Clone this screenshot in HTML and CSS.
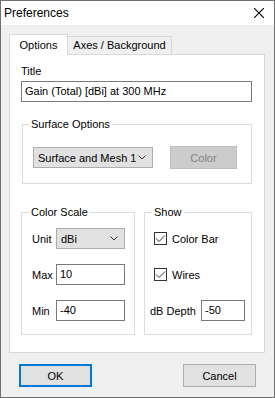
FILE: index.html
```html
<!DOCTYPE html>
<html lang="en">
<head>
    <meta charset="UTF-8">
    <title>Preferences</title>
    <link rel="stylesheet" href="styles.css">
</head>
<body>
    <div class="window">
        <div class="titlebar">
            <span class="caption">Preferences</span>
            <svg class="close" width="10" height="10" viewBox="0 0 10 10">
                <path d="M0 0 L10 10 M10 0 L0 10" stroke="#000" stroke-width="1.1" fill="none"/>
            </svg>
        </div>
        <div class="client">
            <div class="tabs">
                <div class="tab active options">Options</div>
                <div class="tab axes">Axes / Background</div>
            </div>
            <div class="panel">
                <div class="label">Title</div>
                <div class="textbox wide">Gain (Total) [dBi] at 300 MHz</div>

                <fieldset class="group surface">
                    <legend>Surface Options</legend>
                    <div class="group-body">
                        <div class="row">
                            <div class="combo mesh">
                                <span>Surface and Mesh 1</span>
                                <svg class="chev" width="8" height="5" viewBox="0 0 8 5"><path d="M0.5 0.5 L4 4 L7.5 0.5" stroke="#333" fill="none"/></svg>
                            </div>
                            <div class="button disabled color-btn">Color</div>
                        </div>
                    </div>
                </fieldset>

                <div class="groups">
                    <fieldset class="group scale">
                        <legend>Color Scale</legend>
                        <div class="group-body">
                            <div class="row">
                                <span class="row-label">Unit</span>
                                <div class="combo unit">
                                    <span>dBi</span>
                                    <svg class="chev" width="8" height="5" viewBox="0 0 8 5"><path d="M0.5 0.5 L4 4 L7.5 0.5" stroke="#333" fill="none"/></svg>
                                </div>
                            </div>
                            <div class="row">
                                <span class="row-label">Max</span>
                                <div class="textbox small">10</div>
                            </div>
                            <div class="row">
                                <span class="row-label">Min</span>
                                <div class="textbox small">-40</div>
                            </div>
                        </div>
                    </fieldset>

                    <fieldset class="group show">
                        <legend>Show</legend>
                        <div class="group-body">
                            <div class="row check-row">
                                <span class="checkbox"><svg width="11" height="11" viewBox="0 0 11 11"><path d="M1 5.5 L4 8.5 L10 2.5" stroke="#333" fill="none"/></svg></span>
                                <span>Color Bar</span>
                            </div>
                            <div class="row check-row">
                                <span class="checkbox"><svg width="11" height="11" viewBox="0 0 11 11"><path d="M1 5.5 L4 8.5 L10 2.5" stroke="#333" fill="none"/></svg></span>
                                <span>Wires</span>
                            </div>
                            <div class="row">
                                <span class="depth-label">dB Depth</span>
                                <div class="textbox depth">-50</div>
                            </div>
                        </div>
                    </fieldset>
                </div>
            </div>
            <div class="footer">
                <div class="button default">OK</div>
                <div class="button">Cancel</div>
            </div>
        </div>
    </div>
</body>
</html>
```

FILE: styles.css
```css
body {
    margin: 0;
    font-family: "Liberation Sans", Arial, sans-serif;
    font-size: 11px;
    color: #000;
}
.window {
    width: 275px;
    height: 398px;
    box-sizing: border-box;
    border: 1px solid #6f6f6f;
    background-color: #f0f0f0;
}
.titlebar {
    height: 24px;
    background-color: #fff;
    display: flex;
    align-items: center;
    justify-content: space-between;
    padding: 0 10px 0 3px;
}
.caption {
    font-size: 12px;
    line-height: 16px;
}
.client {
    padding: 9px 9px 0 8px;
}
.tabs {
    display: flex;
    align-items: flex-end;
    height: 20px;
}
.tab {
    height: 18px;
    line-height: 17px;
    text-align: center;
    background-color: #f0f0f0;
    border: 1px solid #d9d9d9;
    border-bottom: none;
    box-sizing: border-box;
}
.tab.options {
    width: 59px;
}
.tab.axes {
    width: 104px;
    border-left: none;
}
.tab.active {
    height: 21px;
    line-height: 20px;
    background-color: #fff;
    margin-bottom: -1px;
    position: relative;
    z-index: 1;
}
.panel {
    background-color: #fff;
    border: 1px solid #d9d9d9;
    padding: 8px 12px 17px 11px;
}
.label {
    height: 16px;
    line-height: 16px;
    margin-bottom: 2px;
}
.textbox {
    height: 21px;
    box-sizing: border-box;
    border: 1px solid #7a7a7a;
    background-color: #fff;
    line-height: 19px;
    padding-left: 3px;
    white-space: nowrap;
}
.textbox.wide {
    width: 231px;
}
.textbox.small {
    width: 69px;
}
.textbox.depth {
    width: 44px;
}
.group {
    margin: 0;
    padding: 0;
    border: 1px solid #dcdcdc;
    min-width: 0;
    box-sizing: border-box;
}
.group legend {
    padding: 0 2px;
    margin-left: 7px;
    height: 16px;
    line-height: 16px;
}
.surface {
    width: 230px;
    margin: 14px 0 0 1px;
}
.surface legend {
    margin-left: 6px;
}
.surface .group-body {
    padding: 15px 0 15px 10px;
}
.row {
    display: flex;
    align-items: center;
    height: 21px;
}
.combo {
    height: 21px;
    box-sizing: border-box;
    border: 1px solid #adadad;
    background-color: #e1e1e1;
    display: flex;
    align-items: center;
    justify-content: space-between;
    padding: 0 6px 0 4px;
    white-space: nowrap;
}
.combo.mesh {
    width: 120px;
}
.combo.unit {
    width: 69px;
}
.button {
    height: 23px;
    box-sizing: border-box;
    border: 1px solid #adadad;
    background-color: #e1e1e1;
    display: flex;
    align-items: center;
    justify-content: center;
    width: 73px;
}
.button.disabled {
    background-color: #cccccc;
    border-color: #bfbfbf;
    color: #838383;
}
.color-btn {
    width: 67px;
    margin-left: 17px;
}
.button.default {
    border: 2px solid #0078d7;
}
.groups {
    display: flex;
    gap: 9px;
    margin-top: 20px;
}
.scale {
    width: 114px;
}
.scale .group-body {
    padding: 8px 9px 13px 10px;
}
.show {
    width: 108px;
}
.show .group-body {
    padding: 8px 6px 13px 5px;
}
.group-body .row + .row {
    margin-top: 15px;
}
.row-label {
    width: 24px;
}
.check-row {
    padding-left: 4px;
    gap: 5px;
}
.checkbox {
    width: 13px;
    height: 13px;
    box-sizing: border-box;
    border: 1px solid #333;
    background-color: #fff;
    display: flex;
    align-items: center;
    justify-content: center;
}
.depth-label {
    width: 51px;
}
.footer {
    display: flex;
    justify-content: space-between;
    padding: 11px 9px 0 10px;
}
```
